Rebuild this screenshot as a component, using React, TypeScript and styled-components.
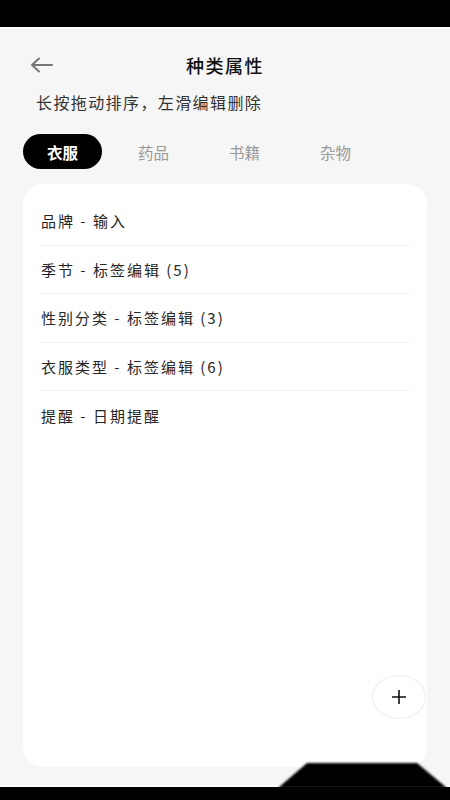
import React, { useState } from 'react';
import styled, { createGlobalStyle } from 'styled-components';

const GlobalStyle = createGlobalStyle`
    html, body {
        margin: 0;
        padding: 0;
        background: #f6f6f6;
    }
    * {
        box-sizing: border-box;
    }
`;

const Screen = styled.div`
    position: relative;
    width: 450px;
    height: 800px;
    display: flex;
    flex-direction: column;
    background: #f6f6f6;
    font-family: 'Noto Sans CJK SC', 'Noto Sans', sans-serif;
    overflow: hidden;
`;

const StatusBar = styled.div`
    height: 29px;
    flex-shrink: 0;
    background: #000;
    border-bottom: 2px solid #fff;
`;

const Header = styled.div`
    position: relative;
    height: 36px;
    margin-top: 18px;
    display: flex;
    align-items: center;
    justify-content: center;

    .back-icon {
        position: absolute;
        left: 30px;
        top: 10px;
        cursor: pointer;
    }
`;

const Title = styled.h1`
    margin: 0;
    font-size: 18px;
    font-weight: 500;
    letter-spacing: 1.5px;
    color: #111;
`;

const Hint = styled.p`
    margin: 8px 0 0 36px;
    height: 22px;
    line-height: 22px;
    font-size: 16px;
    letter-spacing: 1.4px;
    color: #333;
`;

const Tabs = styled.div`
    display: flex;
    gap: 12px;
    margin: 21px 0 0 23px;
`;

const Tab = styled.button<{ $active: boolean }>`
    width: 79px;
    height: 35px;
    border: none;
    border-radius: 18px;
    padding: 0;
    font-family: inherit;
    font-size: 15.5px;
    font-weight: ${(p) => (p.$active ? 700 : 400)};
    color: ${(p) => (p.$active ? '#fff' : '#999')};
    background: ${(p) => (p.$active ? '#000' : 'transparent')};
    cursor: pointer;
`;

const Card = styled.div`
    position: relative;
    flex: 1;
    margin: 15px 23px 18px;
    padding: 13px 17px 0;
    background: #fff;
    border-radius: 20px;
`;

const Row = styled.div<{ $last: boolean }>`
    height: 48.5px;
    display: flex;
    align-items: center;
    padding-left: 1px;
    font-size: 15px;
    letter-spacing: 2px;
    color: #262626;
    border-bottom: ${(p) => (p.$last ? 'none' : '1px solid #eee')};
`;

const AddButton = styled.button`
    position: absolute;
    right: 1px;
    bottom: 48px;
    width: 54px;
    height: 44px;
    border-radius: 50%;
    border: 1px solid #ececec;
    background: #fff;
    display: flex;
    align-items: center;
    justify-content: center;
    padding: 0;
    cursor: pointer;
`;

const BottomBar = styled.div`
    height: 15px;
    flex-shrink: 0;
    background: #000;
    border-top: 2px solid #fff;
`;

const Notch = styled.svg`
    position: absolute;
    left: 270px;
    bottom: 10px;
    filter: blur(0.8px);
`;

const tabs = ['衣服', '药品', '书籍', '杂物'];

const attributes = [
    '品牌 - 输入',
    '季节 - 标签编辑 (5)',
    '性别分类 - 标签编辑 (3)',
    '衣服类型 - 标签编辑 (6)',
    '提醒 - 日期提醒',
];

const App: React.FC = () => {
    const [activeTab, setActiveTab] = useState<number>(0);

    return (
        <Screen>
            <GlobalStyle />
            <StatusBar />
            <Header>
                <svg className="back-icon" width="24" height="16" viewBox="0 0 24 16" fill="none">
                    <path d="M2 8H22M9 1.5L2 8l7 6.5" stroke="#777" strokeWidth="2" strokeLinecap="round" strokeLinejoin="round" />
                </svg>
                <Title>种类属性</Title>
            </Header>
            <Hint>长按拖动排序，左滑编辑删除</Hint>
            <Tabs>
                {tabs.map((tab, i) => (
                    <Tab key={tab} $active={i === activeTab} onClick={() => setActiveTab(i)}>
                        {tab}
                    </Tab>
                ))}
            </Tabs>
            <Card>
                {attributes.map((item, i) => (
                    <Row key={item} $last={i === attributes.length - 1}>
                        {item}
                    </Row>
                ))}
                <AddButton>
                    <svg width="16" height="16" viewBox="0 0 16 16">
                        <path d="M8 1V15M1 8H15" stroke="#111" strokeWidth="1.6" />
                    </svg>
                </AddButton>
            </Card>
            <BottomBar />
            <Notch width="180" height="30" viewBox="0 0 180 30">
                <polygon points="37,3 147,3 177,28 8,28" fill="#000" />
            </Notch>
        </Screen>
    );
};

export default App;
